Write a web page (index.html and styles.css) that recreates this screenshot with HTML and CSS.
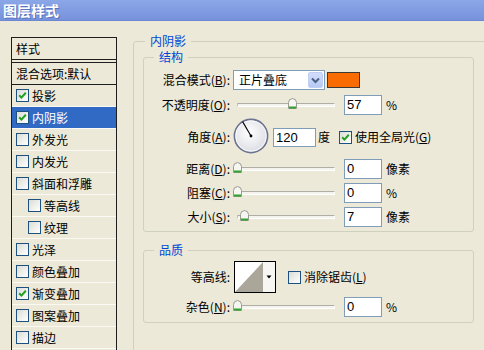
FILE: index.html
```html
<!DOCTYPE html>
<html lang="zh-CN">
<head>
<meta charset="utf-8">
<title>图层样式</title>
<link rel="stylesheet" href="styles.css">
</head>
<body>
<div class="titlebar">图层样式</div>
<div class="main">
  <div class="list">
    <div class="list-head">样式</div>
    <div class="list-blend">混合选项:默认</div>
    <div class="item"><span class="cb"><svg width="11" height="11" viewBox="0 0 11 11"><path d="M2.2 5.2 L4.4 7.6 L8.8 2.8" fill="none" stroke="#21a121" stroke-width="2"/></svg></span>投影</div>
    <div class="item selected"><span class="cb"><svg width="11" height="11" viewBox="0 0 11 11"><path d="M2.2 5.2 L4.4 7.6 L8.8 2.8" fill="none" stroke="#21a121" stroke-width="2"/></svg></span>内阴影</div>
    <div class="item"><span class="cb"></span>外发光</div>
    <div class="item"><span class="cb"></span>内发光</div>
    <div class="item"><span class="cb"></span>斜面和浮雕</div>
    <div class="item indent"><span class="cb"></span>等高线</div>
    <div class="item indent"><span class="cb"></span>纹理</div>
    <div class="item"><span class="cb"></span>光泽</div>
    <div class="item"><span class="cb"></span>颜色叠加</div>
    <div class="item"><span class="cb"><svg width="11" height="11" viewBox="0 0 11 11"><path d="M2.2 5.2 L4.4 7.6 L8.8 2.8" fill="none" stroke="#21a121" stroke-width="2"/></svg></span>渐变叠加</div>
    <div class="item"><span class="cb"></span>图案叠加</div>
    <div class="item"><span class="cb"></span>描边</div>
  </div>

  <fieldset class="group outer">
    <legend>内阴影</legend>

    <fieldset class="group sub structure">
      <legend>结构</legend>

      <div class="row r-blend">
        <span class="label">混合模式(<u>B</u>):</span>
        <div class="select">
          <span class="select-text">正片叠底</span>
          <span class="select-btn"><svg width="9" height="7" viewBox="0 0 9 7"><path d="M1 1.5 L4.5 5 L8 1.5" fill="none" stroke="#4d6185" stroke-width="2"/></svg></span>
        </div>
        <span class="swatch"></span>
      </div>

      <div class="row r-opacity">
        <span class="label">不透明度(<u>O</u>):</span>
        <div class="slider"><div class="track"><span class="thumb" style="left:57%"><svg width="9" height="11" viewBox="0 0 9 11"><path d="M0.5 10.5 V4.5 Q0.5 1 4.5 0.5 Q8.5 1 8.5 4.5 V10.5 Z" fill="#f5f5f1" stroke="#9a9a92"/><path d="M1 9.5 H8" stroke="#2fa52f" stroke-width="2"/></svg></span></div></div>
        <span class="input">57</span>
        <span class="unit">%</span>
      </div>

      <div class="row r-angle">
        <span class="label">角度(<u>A</u>):</span>
        <span class="dial"><svg width="36" height="36" viewBox="0 0 36 36"><defs><radialGradient id="dg" cx="0.45" cy="0.4" r="0.6"><stop offset="0" stop-color="#ffffff"/><stop offset="1" stop-color="#dcdde3"/></radialGradient></defs><circle cx="18" cy="18" r="16.6" fill="url(#dg)" stroke="#6c7390" stroke-width="1.6"/><circle cx="18" cy="18" r="15.2" fill="none" stroke="#ffffff" stroke-width="0.8"/><path d="M18 18 L9.6 3.6" stroke="#000" stroke-width="1.1"/><circle cx="18" cy="18" r="1.4" fill="#000"/></svg></span>
        <span class="input wide">120</span>
        <span class="unit deg">度</span>
        <span class="cb gl"><svg width="11" height="11" viewBox="0 0 11 11"><path d="M2.2 5.2 L4.4 7.6 L8.8 2.8" fill="none" stroke="#21a121" stroke-width="2"/></svg></span>
        <span class="cb-text">使用全局光(<u>G</u>)</span>
      </div>

      <div class="row r-dist">
        <span class="label">距离(<u>D</u>):</span>
        <div class="slider"><div class="track"><span class="thumb" style="left:0%"><svg width="9" height="11" viewBox="0 0 9 11"><path d="M0.5 10.5 V4.5 Q0.5 1 4.5 0.5 Q8.5 1 8.5 4.5 V10.5 Z" fill="#f5f5f1" stroke="#9a9a92"/><path d="M1 9.5 H8" stroke="#2fa52f" stroke-width="2"/></svg></span></div></div>
        <span class="input">0</span>
        <span class="unit">像素</span>
      </div>

      <div class="row r-choke">
        <span class="label">阻塞(<u>C</u>):</span>
        <div class="slider"><div class="track"><span class="thumb" style="left:0%"><svg width="9" height="11" viewBox="0 0 9 11"><path d="M0.5 10.5 V4.5 Q0.5 1 4.5 0.5 Q8.5 1 8.5 4.5 V10.5 Z" fill="#f5f5f1" stroke="#9a9a92"/><path d="M1 9.5 H8" stroke="#2fa52f" stroke-width="2"/></svg></span></div></div>
        <span class="input">0</span>
        <span class="unit">%</span>
      </div>

      <div class="row r-size">
        <span class="label">大小(<u>S</u>):</span>
        <div class="slider"><div class="track"><span class="thumb" style="left:7%"><svg width="9" height="11" viewBox="0 0 9 11"><path d="M0.5 10.5 V4.5 Q0.5 1 4.5 0.5 Q8.5 1 8.5 4.5 V10.5 Z" fill="#f5f5f1" stroke="#9a9a92"/><path d="M1 9.5 H8" stroke="#2fa52f" stroke-width="2"/></svg></span></div></div>
        <span class="input">7</span>
        <span class="unit">像素</span>
      </div>
    </fieldset>

    <fieldset class="group sub quality">
      <legend>品质</legend>

      <div class="row r-contour">
        <span class="label">等高线:</span>
        <span class="contour"><svg width="40" height="30" viewBox="0 0 40 30"><rect x="0" y="0" width="28" height="30" fill="#ffffff"/><polygon points="0,30 28,0 28,30" fill="#aaa79a"/><rect x="28" y="0" width="12" height="30" fill="#f7f6f2"/><polygon points="31.5,13.5 36.5,13.5 34,16.5" fill="#000"/></svg></span>
        <span class="cb aa"></span>
        <span class="cb-text">消除锯齿(<u>L</u>)</span>
      </div>

      <div class="row r-noise">
        <span class="label">杂色(<u>N</u>):</span>
        <div class="slider"><div class="track"><span class="thumb" style="left:0%"><svg width="9" height="11" viewBox="0 0 9 11"><path d="M0.5 10.5 V4.5 Q0.5 1 4.5 0.5 Q8.5 1 8.5 4.5 V10.5 Z" fill="#f5f5f1" stroke="#9a9a92"/><path d="M1 9.5 H8" stroke="#2fa52f" stroke-width="2"/></svg></span></div></div>
        <span class="input">0</span>
        <span class="unit">%</span>
      </div>
    </fieldset>
  </fieldset>
</div>
</body>
</html>
```

FILE: styles.css
```css
* { box-sizing: border-box; }
html, body { margin: 0; padding: 0; }
body {
  width: 484px;
  height: 350px;
  overflow: hidden;
  background: #ece9d8;
  font-family: "Noto Sans CJK SC", "Noto Sans", sans-serif;
  font-size: 12px;
  color: #000;
}
u { text-decoration: underline; text-underline-offset: 1px; }

.titlebar {
  height: 21px;
  background: linear-gradient(#8ca7e7, #7692dc);
  border-bottom: 1px solid #6c88d4;
  color: #fff;
  font-weight: bold;
  font-size: 14px;
  line-height: 20px;
  padding-left: 3px;
  text-shadow: 1px 1px 0 #5a74bb;
}

.main {
  display: flex;
  align-items: flex-start;
  padding-left: 11px;
  height: 329px;
  overflow: hidden;
}

/* ---------- left style list ---------- */
.list {
  flex: none;
  width: 106px;
  height: 340px;
  margin-top: 16px;
  border: 1px solid #1e1e1e;
}
.list-head {
  height: 25px;
  border-bottom: 4px double #1e1e1e;
  padding-left: 4px;
  line-height: 21px;
}
.list-blend {
  height: 22px;
  border-bottom: 1px solid #1e1e1e;
  padding-left: 4px;
  line-height: 21px;
}
.item {
  height: 22px;
  border-bottom: 1px solid #faf9f3;
  display: flex;
  align-items: center;
  gap: 3px;
  padding-left: 4px;
  line-height: 16px;
}
.item.indent { padding-left: 16px; }
.item.selected { background: #316ac5; color: #fff; }

.cb {
  flex: none;
  width: 13px;
  height: 13px;
  border: 1px solid #1c5180;
  background: linear-gradient(135deg, #dcdcd5, #ffffff);
  display: flex;
}

/* ---------- group boxes ---------- */
.group {
  margin: 0;
  border: 1px solid #d0d0bf;
  border-radius: 3px;
  min-width: 0;
}
.group > legend {
  color: #0046d5;
  padding: 0 5px;
  line-height: 14px;
  font-size: 12px;
}
.outer {
  flex: none;
  margin-left: 16px;
  margin-top: 13px;
  width: 370px;
  height: 340px;
  padding: 2px 0 0 9px;
}
.outer > legend { margin-left: 2px; }
.sub {
  width: 331px;
  padding: 5px 0 2px 0;
}
.sub > legend { margin-left: 10px; }
.quality {
  margin-top: 11px;
  padding: 4px 0 5px 0;
}

/* ---------- rows ---------- */
.row {
  display: flex;
  align-items: center;
  line-height: 16px;
  white-space: nowrap;
}
.label {
  flex: none;
  width: 86px;
  text-align: right;
}
.r-blend { height: 22px; }
.r-opacity { height: 27px; }
.r-angle { height: 38px; }
.r-dist { height: 25px; }
.r-choke { height: 24px; }
.r-size { height: 24px; }
.r-contour { height: 32px; }
.r-noise { height: 20px; margin-top: 4px; }

.select {
  flex: none;
  margin-left: 3px;
  width: 92px;
  height: 20px;
  border: 1px solid #7f9db9;
  background: #fff;
  display: flex;
  align-items: center;
  justify-content: space-between;
  padding: 0 1px 0 5px;
}
.select-btn {
  width: 15px;
  height: 16px;
  background: linear-gradient(#d2ddfb, #b7caf5);
  border: 1px solid #c0cff3;
  border-radius: 2px;
  display: flex;
  align-items: center;
  justify-content: center;
}
.swatch {
  flex: none;
  margin-left: 2px;
  width: 33px;
  height: 16px;
  background: #f86c02;
  border: 1px solid #3a3a3a;
}

.slider {
  flex: none;
  margin-left: 3px;
  width: 111px;
  padding-left: 4px;
  display: flex;
  align-items: center;
}
.track {
  position: relative;
  width: 98px;
  height: 4px;
  background: #f4f3ee;
  border-top: 1px solid #aeada6;
  border-left: 1px solid #c6c5bd;
  border-bottom: 1px solid #ffffff;
  border-right: 1px solid #ffffff;
}
.thumb {
  position: absolute;
  top: -6px;
  margin-left: -5px;
  width: 9px;
  height: 11px;
  display: block;
  line-height: 0;
}

.input {
  flex: none;
  width: 38px;
  height: 20px;
  border: 1px solid #7f9db9;
  background: #fff;
  padding-left: 2px;
  font-family: "Liberation Sans", Arial, sans-serif;
  font-size: 13px;
  line-height: 18px;
}
.input.wide { width: 43px; margin-left: 4px; height: 19px; }
.unit { margin-left: 4px; }
.unit.deg { margin-left: 2px; }

.dial {
  flex: none;
  margin-left: 3px;
  width: 36px;
  height: 36px;
  line-height: 0;
  margin-top: -2px;
}
.cb.gl { margin-left: 9px; }
.cb-text { margin-left: 3px; }

.contour {
  flex: none;
  margin-left: 4px;
  width: 42px;
  height: 32px;
  border: 1px solid #000;
  line-height: 0;
}
.cb.aa { margin-left: 12px; }
```
